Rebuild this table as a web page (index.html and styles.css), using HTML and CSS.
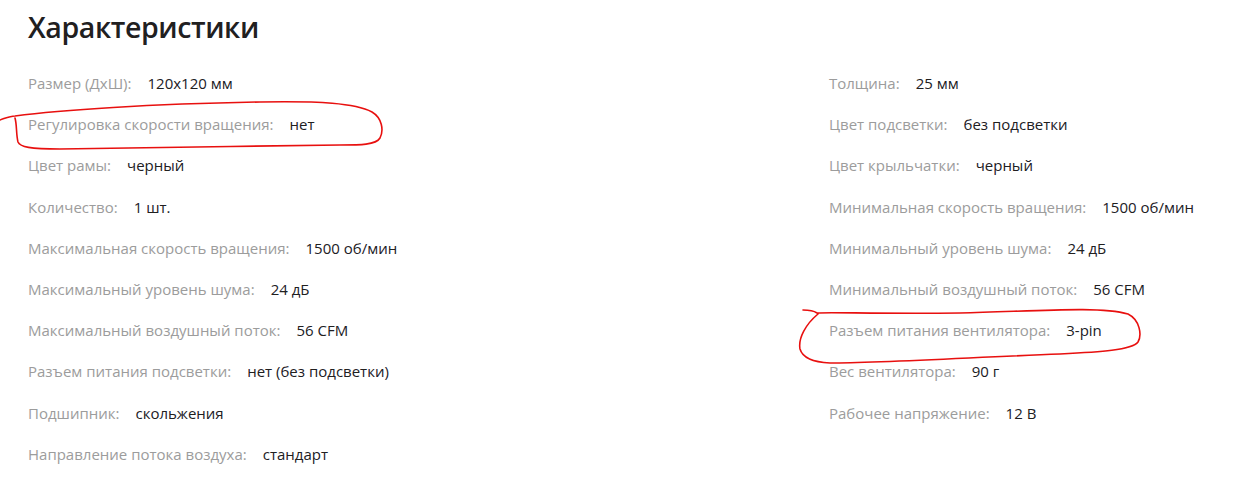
FILE: index.html
```html
<!DOCTYPE html>
<html lang="ru">
<head>
<meta charset="utf-8">
<title>Характеристики</title>
<link rel="stylesheet" href="styles.css">
</head>
<body>
<div class="page">
  <h1 class="title">Характеристики</h1>
  <div class="specs">
    <ul class="col">
      <li class="row"><span class="label">Размер (ДхШ):</span><span class="value">120x120 мм</span></li>
      <li class="row"><span class="label">Регулировка скорости вращения:</span><span class="value">нет</span></li>
      <li class="row"><span class="label">Цвет рамы:</span><span class="value">черный</span></li>
      <li class="row"><span class="label">Количество:</span><span class="value">1 шт.</span></li>
      <li class="row"><span class="label">Максимальная скорость вращения:</span><span class="value">1500 об/мин</span></li>
      <li class="row"><span class="label">Максимальный уровень шума:</span><span class="value">24 дБ</span></li>
      <li class="row"><span class="label">Максимальный воздушный поток:</span><span class="value">56 CFM</span></li>
      <li class="row"><span class="label">Разъем питания подсветки:</span><span class="value">нет (без подсветки)</span></li>
      <li class="row"><span class="label">Подшипник:</span><span class="value">скольжения</span></li>
      <li class="row"><span class="label">Направление потока воздуха:</span><span class="value">стандарт</span></li>
    </ul>
    <ul class="col">
      <li class="row"><span class="label">Толщина:</span><span class="value">25 мм</span></li>
      <li class="row"><span class="label">Цвет подсветки:</span><span class="value">без подсветки</span></li>
      <li class="row"><span class="label">Цвет крыльчатки:</span><span class="value">черный</span></li>
      <li class="row"><span class="label">Минимальная скорость вращения:</span><span class="value">1500 об/мин</span></li>
      <li class="row"><span class="label">Минимальный уровень шума:</span><span class="value">24 дБ</span></li>
      <li class="row"><span class="label">Минимальный воздушный поток:</span><span class="value">56 CFM</span></li>
      <li class="row"><span class="label">Разъем питания вентилятора:</span><span class="value">3-pin</span></li>
      <li class="row"><span class="label">Вес вентилятора:</span><span class="value">90 г</span></li>
      <li class="row"><span class="label">Рабочее напряжение:</span><span class="value">12 В</span></li>
    </ul>
  </div>
</div>
<svg class="marks" width="1254" height="489" viewBox="0 0 1254 489" fill="none" stroke="#e8100f" stroke-width="1.6" stroke-linecap="round" stroke-linejoin="round">
  <path d="M0 120 C6 118 10 116 15 116 C60 110 150 104 260 102 C320 101 355 103 372 112 C382 118 384 130 380 138 C376 145 360 145 340 145 C250 146 130 148 60 149 C30 149 20 147 18 142 C16 134 17 125 15 118"/>
  <path d="M803 310 C808 310 814 311 817 313 C830 312 880 314 960 313 C1040 311 1100 306 1128 314 C1140 320 1142 335 1138 342 C1132 350 1100 352 1060 354 C980 357 880 363 830 363 C810 362 802 356 800 349 C798 338 806 324 818 314"/>
</svg>
</body>
</html>
```

FILE: styles.css
```css
html, body {
  margin: 0;
  padding: 0;
  background: #ffffff;
}

body {
  font-family: "Open Sans", "Noto Sans", Arial, sans-serif;
  color: #21201f;
  width: 1254px;
  height: 489px;
  overflow: hidden;
  position: relative;
}

.page {
  padding: 7px 28px 0;
}

.title {
  margin: 0;
  font-size: 28.5px;
  line-height: 40px;
  font-weight: 600;
  color: #21201f;
  letter-spacing: -0.4px;
}

.specs {
  display: grid;
  grid-template-columns: 801px 1fr;
  margin-top: 16px;
}

.col {
  list-style: none;
  margin: 0;
  padding: 0;
}

.row {
  display: flex;
  gap: 16px;
  height: 41.2px;
  line-height: 41.2px;
  font-size: 15px;
  white-space: nowrap;
}

.label {
  color: #9c9c9c;
}

.value {
  color: #21201f;
}

.marks {
  position: absolute;
  left: 0;
  top: 0;
  pointer-events: none;
}
```
